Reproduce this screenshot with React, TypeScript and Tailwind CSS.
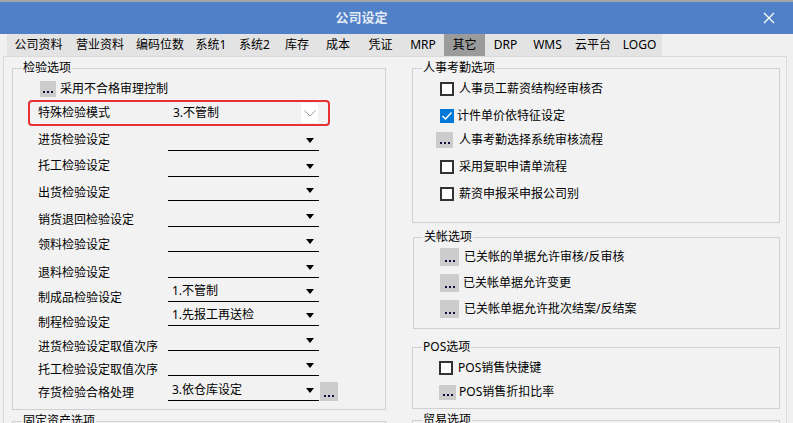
import React from "react";

const tabs = [
  { name: "公司资料", w: "w-[63px]" },
  { name: "营业资料", w: "w-[60px]" },
  { name: "编码位数", w: "w-[60px]" },
  { name: "系统1", w: "w-[42px]" },
  { name: "系统2", w: "w-[45px]" },
  { name: "库存", w: "w-[40px]" },
  { name: "成本", w: "w-[42px]" },
  { name: "凭证", w: "w-[43px]" },
  { name: "MRP", w: "w-[42px]" },
  { name: "其它", w: "w-[41px]", active: true },
  { name: "DRP", w: "w-[41px]" },
  { name: "WMS", w: "w-[43px]" },
  { name: "云平台", w: "w-[48px]" },
  { name: "LOGO", w: "w-[45px]" },
];

const labels = [
  { text: "进货检验设定", h: "h-[26px]" },
  { text: "托工检验设定", h: "h-[27px]" },
  { text: "出货检验设定", h: "h-[27px]" },
  { text: "销货退回检验设定", h: "h-[25px]" },
  { text: "领料检验设定", h: "h-[28px]" },
  { text: "退料检验设定", h: "h-[25px]" },
  { text: "制成品检验设定", h: "h-[25px]" },
  { text: "制程检验设定", h: "h-[24px]" },
  { text: "进货检验设定取值次序", h: "h-[23px]" },
  { text: "托工检验设定取值次序", h: "h-[23px]" },
  { text: "存货检验合格处理", h: "h-[20px]" },
];

const combos = [
  { value: "", h: "h-[26px]" },
  { value: "", h: "h-[24px]" },
  { value: "", h: "h-[26px]" },
  { value: "", h: "h-[25px]" },
  { value: "", h: "h-[26px]" },
  { value: "", h: "h-[24px]" },
  { value: "1.不管制", h: "h-[24px]" },
  { value: "1.先报工再送检", h: "h-[25px]" },
  { value: "", h: "h-[25px]" },
  { value: "", h: "h-[25px]" },
  { value: "3.依仓库设定", h: "h-[21px]", more: true },
];

function Dots({ className }: { className: string }) {
  return (
    <div className={`flex shrink-0 items-end justify-center gap-[2px] bg-[#cccccc] pb-[4px] ${className}`}>
      <span className="h-[2px] w-[2px] bg-[#101040]" />
      <span className="h-[2px] w-[2px] bg-[#101040]" />
      <span className="h-[2px] w-[2px] bg-[#101040]" />
    </div>
  );
}

function Box({ checked }: { checked?: boolean }) {
  if (checked)
    return (
      <div className="flex h-[14px] w-[14px] shrink-0 items-center justify-center bg-[#0078d7]">
        <svg width="12" height="10" viewBox="0 0 12 10">
          <polyline points="1.5,5 4.5,8 10.5,1.5" fill="none" stroke="#fff" strokeWidth="1.4" />
        </svg>
      </div>
    );
  return <div className="h-[14px] w-[14px] shrink-0 border-2 border-[#333] bg-white" />;
}

function Group({ title, h, className = "", children }: { title: string; h: string; className?: string; children?: React.ReactNode }) {
  return (
    <div className={`relative shrink-0 border border-[#d0d0d0] ${h} ${className}`}>
      <span className="absolute left-[9px] top-[-11px] bg-[#f2f2f2] px-[1px] leading-[20px]">{title}</span>
      {children}
    </div>
  );
}

function Arrow() {
  return (
    <svg width="8" height="5" viewBox="0 0 8 5" className="shrink-0">
      <path d="M0 0 L8 0 L4 5 Z" fill="#000" />
    </svg>
  );
}

export default function App() {
  return (
    <div className="flex h-[423px] w-[793px] flex-col overflow-hidden bg-[#f0f0f0] font-['Noto_Sans','Noto_Sans_CJK_SC',sans-serif] text-[12px] text-black">
      <div className="h-[2px] shrink-0 bg-[#a3a3a3]" />
      <div className="flex h-[32px] shrink-0 items-center bg-[#5081c8]">
        <div className="flex-1 pr-[40px] text-center text-[13px] font-bold text-[#e4eaf4]">公司设定</div>
        <svg width="12" height="12" viewBox="0 0 12 12" className="mr-[18px]">
          <path d="M1 1 L11 11 M11 1 L1 11" stroke="#fff" strokeWidth="1.3" />
        </svg>
      </div>
      <div className="flex h-[22px] shrink-0 pl-[7px]">
        {tabs.map((t) => (
          <div
            key={t.name}
            className={`${t.w} flex items-center justify-center leading-none ${t.active ? "bg-[#9b9b9b]" : "bg-[#e3e3e3]"}`}
          >
            {t.name}
          </div>
        ))}
      </div>
      <div className="ml-[3px] flex min-h-0 w-[784px] flex-1 gap-[26px] overflow-hidden border-l border-r border-t border-[#dadada] bg-[#f2f2f2] pl-[8px] pt-[11px]">
        <div className="flex w-[374px] shrink-0 flex-col">
          <Group title="检验选项" h="h-[342px]">
            <div className="mt-[12px] flex h-[16px] items-center pl-[27px]">
              <Dots className="h-[16px] w-[16px]" />
              <span className="ml-[4px] leading-[16px]">采用不合格审理控制</span>
            </div>
            <div className="ml-[15px] mt-[3px] flex h-[26px] w-[302px] items-center rounded-[4px] border-2 border-[#e63232] pl-[8px] pr-[10px]">
              <span className="w-[135px] leading-[20px]">特殊检验模式</span>
              <span className="flex-1 leading-[20px]">3.不管制</span>
              <div className="flex h-[20px] w-[17px] items-center justify-center bg-white">
                <svg width="12" height="7" viewBox="0 0 12 7">
                  <polyline points="0.5,0.5 6,6 11.5,0.5" fill="none" stroke="#9a9a9a" strokeWidth="1" />
                </svg>
              </div>
            </div>
            <div className="mt-[4px] flex">
              <div className="ml-[25px] flex w-[130px] flex-col">
                {labels.map((l) => (
                  <div key={l.text} className={`${l.h} whitespace-nowrap leading-[20px]`}>
                    {l.text}
                  </div>
                ))}
              </div>
              <div className="flex flex-col">
                {combos.map((c, i) => (
                  <div key={i} className={`${c.h} flex items-start`}>
                    <div className="flex h-[21px] w-[151px] items-center border-b border-black pl-[4px] pr-[5px]">
                      <span className="flex-1 leading-[20px]">{c.value}</span>
                      <Arrow />
                    </div>
                    {c.more && <Dots className="ml-[1px] h-[19px] w-[18px] self-end" />}
                  </div>
                ))}
              </div>
            </div>
          </Group>
          <Group title="固定资产选项" h="h-[40px]" className="mt-[11px]" />
        </div>
        <div className="flex w-[368px] shrink-0 flex-col">
          <Group title="人事考勤选项" h="h-[155px]">
            <div className="mt-[10px] flex flex-col pl-[23px]">
              <div className="flex h-[27px] items-start">
                <div className="flex h-[20px] w-[18px] items-center justify-end"><Box /></div>
                <span className="ml-[5px] leading-[20px]">人事员工薪资结构经审核否</span>
              </div>
              <div className="flex h-[24px] items-start">
                <div className="flex h-[20px] w-[18px] items-center justify-end"><Box checked /></div>
                <span className="ml-[3px] leading-[20px]">计件单价依特征设定</span>
              </div>
              <div className="flex h-[27px] items-start">
                <div className="flex h-[20px] w-[18px] items-center"><Dots className="h-[16px] w-[17px]" /></div>
                <span className="ml-[5px] leading-[20px]">人事考勤选择系统审核流程</span>
              </div>
              <div className="flex h-[27px] items-start">
                <div className="flex h-[20px] w-[18px] items-center justify-end"><Box /></div>
                <span className="ml-[5px] leading-[20px]">采用复职申请单流程</span>
              </div>
              <div className="flex h-[20px] items-start">
                <div className="flex h-[20px] w-[18px] items-center justify-end"><Box /></div>
                <span className="ml-[5px] leading-[20px]">薪资申报采申报公司别</span>
              </div>
            </div>
          </Group>
          <Group title="关帐选项" h="h-[92px]" className="ml-[1px] mt-[14px]">
            <div className="mt-[9px] flex flex-col pl-[26px]">
              <div className="flex h-[26px] items-start">
                <div className="flex h-[20px] items-center"><Dots className="h-[18px] w-[19px]" /></div>
                <span className="ml-[5px] leading-[20px]">已关帐的单据允许审核/反审核</span>
              </div>
              <div className="flex h-[26px] items-start">
                <div className="flex h-[20px] items-center"><Dots className="h-[18px] w-[19px]" /></div>
                <span className="ml-[4px] leading-[20px]">已关帐单据允许变更</span>
              </div>
              <div className="flex h-[20px] items-start">
                <div className="flex h-[20px] items-center"><Dots className="h-[18px] w-[19px]" /></div>
                <span className="ml-[5px] leading-[20px]">已关帐单据允许批次结案/反结案</span>
              </div>
            </div>
          </Group>
          <Group title="POS选项" h="h-[62px]" className="mt-[18px]">
            <div className="mt-[10px] flex flex-col pl-[26px]">
              <div className="flex h-[24px] items-start">
                <div className="flex h-[20px] w-[17px] items-center"><Box /></div>
                <span className="ml-[2px] leading-[20px]">POS销售快捷键</span>
              </div>
              <div className="flex h-[20px] items-start">
                <div className="flex h-[20px] w-[17px] items-center"><Dots className="h-[15px] w-[17px]" /></div>
                <span className="ml-[3px] leading-[20px]">POS销售折扣比率</span>
              </div>
            </div>
          </Group>
          <Group title="贸易选项" h="h-[40px]" className="mt-[11px]" />
        </div>
      </div>
    </div>
  );
}
